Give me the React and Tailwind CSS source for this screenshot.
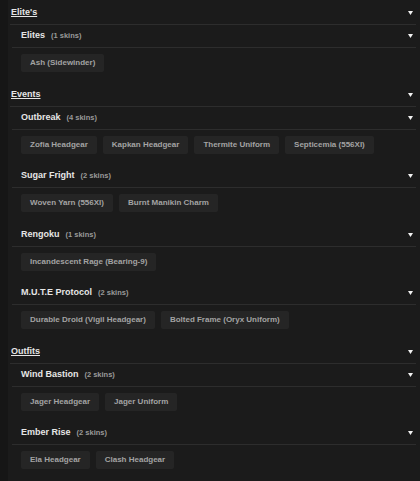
import React from 'react';

const data = [
  {
    title: "Elite's",
    groups: [{ name: 'Elites', skins: ['Ash (Sidewinder)'] }],
  },
  {
    title: 'Events',
    groups: [
      { name: 'Outbreak', skins: ['Zofia Headgear', 'Kapkan Headgear', 'Thermite Uniform', 'Septicemia (556XI)'] },
      { name: 'Sugar Fright', skins: ['Woven Yarn (556XI)', 'Burnt Manikin Charm'] },
      { name: 'Rengoku', skins: ['Incandescent Rage (Bearing-9)'] },
      { name: 'M.U.T.E Protocol', skins: ['Durable Droid (Vigil Headgear)', 'Bolted Frame (Oryx Uniform)'] },
    ],
  },
  {
    title: 'Outfits',
    groups: [
      { name: 'Wind Bastion', skins: ['Jager Headgear', 'Jager Uniform'] },
      { name: 'Ember Rise', skins: ['Ela Headgear', 'Clash Headgear'] },
    ],
  },
];

// tiny down caret used on every header row
const Caret = () => (
  <svg width="5" height="4" viewBox="0 0 5 4" className="shrink-0">
    <polygon points="0,0 5,0 2.5,4" fill="#f2f2f2" />
  </svg>
);

const Group = ({ group }) => (
  <div className="ml-[2px]">
    <div className="flex h-[23px] items-center justify-between border-b border-[#2d2d2d] pl-[9px] pr-[3px]">
      <div className="flex items-baseline">
        <span className="text-[9px] font-bold text-[#e6e6e6]">{group.name}</span>
        <span className="ml-[6px] text-[7.5px] font-bold text-[#9a9a9a]">({group.skins.length} skins)</span>
      </div>
      <Caret />
    </div>
    <div className="flex flex-wrap gap-[6px] pl-[9px] pt-[6px] pb-[11.5px]">
      {group.skins.map((skin) => (
        <div
          key={skin}
          className="flex h-[18px] items-center rounded-[2px] bg-[#252525] px-[9px] text-[8px] font-bold text-[#a3a3a3]"
        >
          {skin}
        </div>
      ))}
    </div>
  </div>
);

export default function App() {
  return (
    <div
      className="min-h-screen bg-[#161616] pl-[8px]"
      style={{ fontFamily: '"Liberation Sans", Arial, sans-serif' }}
    >
      <div className="min-h-screen bg-[#1b1b1b] pt-[2px] pr-[4px] pl-[2px]">
        {data.map((cat) => (
          <div key={cat.title}>
            <div className="flex h-[23px] items-center justify-between border-b border-[#2d2d2d] pl-[1px] pr-[3px]">
              <span className="text-[9px] font-bold text-[#e6e6e6] underline underline-offset-[1px]">{cat.title}</span>
              <Caret />
            </div>
            {cat.groups.map((g) => (
              <Group key={g.name} group={g} />
            ))}
          </div>
        ))}
      </div>
    </div>
  );
}
